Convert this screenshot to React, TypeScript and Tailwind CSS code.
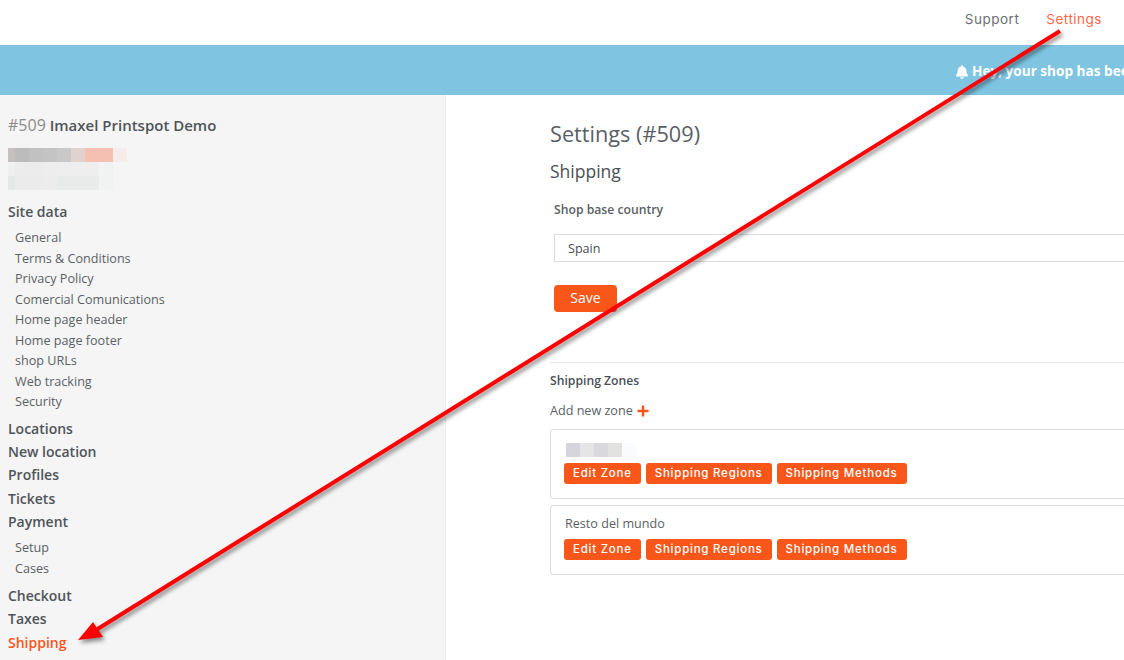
import { FaBell } from 'react-icons/fa';

const siteData = ['General', 'Terms & Conditions', 'Privacy Policy', 'Comercial Comunications', 'Home page header', 'Home page footer', 'shop URLs', 'Web tracking', 'Security'];

// pixelated blocks that hide the private data in the screenshot
const blurTop = ['#c4c0c0', '#bcbcbc', '#c1c1c1', '#c4c4c4', '#c8c8c8', '#e0d3cf', '#f5c0b2', '#f5c0b2', '#f6ecea'];
const blurMid = ['#f0f0f0', '#ececec', '#ececec', '#ededed', '#eeeeee', '#eeeeee', '#eeeeee', '#f1f2f2', '#f5f5f5'];
const blurLow = ['#e6e7e7', '#ebebeb', '#ebebeb', '#ececec', '#e9eaea', '#e9eaea', '#e9eaea', '#f1f3f3', '#f5f5f5'];
const blurZone = ['#d4d4da', '#e5e5e5', '#d9d9dd', '#e2e2e0', '#fafbfd'];

function Blur({ colors, half }: { colors: string[]; half?: boolean }) {
  return (
    <div className="flex h-[14px]">
      {colors.map((c, i) => (
        <div key={i} className={i === 0 && half ? 'w-[7px] h-[14px]' : 'w-[14px] h-[14px]'} style={{ backgroundColor: c }} />
      ))}
    </div>
  );
}

function MainLink({ label, active }: { label: string; active?: boolean }) {
  return (
    <div className={`h-[23.25px] leading-[23px] text-[14px] font-semibold ${active ? 'text-[#f9561a]' : 'text-[#4f5459]'}`}>
      {label}
    </div>
  );
}

function SubLink({ label }: { label: string }) {
  return <div className="h-[20.5px] leading-[20px] text-[12.6px] pl-[7px] text-[#5a5f66]">{label}</div>;
}

function ZoneButton({ label }: { label: string }) {
  return (
    <div className="h-[21px] px-[9px] flex items-center rounded-[3px] bg-[#f9561a] text-white text-[11.5px] tracking-[0.76px] font-['Inter',sans-serif] font-medium whitespace-nowrap">
      {label}
    </div>
  );
}

function Zone({ children }: { children: React.ReactNode }) {
  return (
    <div className="h-[70px] border border-r-0 border-[#dedede] rounded-l-[4px] pl-[13px] pt-[9px]">
      <div className="h-[24px] pb-[6px] flex items-center text-[12.6px] text-[#5a5f66]">{children}</div>
      <div className="flex gap-[5px]">
        <ZoneButton label="Edit Zone" />
        <ZoneButton label="Shipping Regions" />
        <ZoneButton label="Shipping Methods" />
      </div>
    </div>
  );
}

export default function App() {
  return (
    <div className="relative w-[1124px] h-[660px] overflow-hidden bg-white font-['Open_Sans',sans-serif]">
      {/* top nav */}
      <div className="h-[45px] flex items-center justify-end gap-[27px] pr-[22px] pb-[6px] text-[13.5px] tracking-[0.5px] font-['Inter',sans-serif]">
        <span className="text-[#6b6f75]">Support</span>
        <span className="text-[#f9694a]">Settings</span>
      </div>

      {/* banner */}
      <div className="h-[50px] bg-[#7fc5e2] flex items-center pl-[955px] gap-[3px] pt-[3px] text-white text-[13.6px] font-bold whitespace-nowrap overflow-hidden">
        <FaBell className="w-[14px] h-[14px] shrink-0" />
        <span>Hey, your shop has been created</span>
      </div>

      <div className="flex h-[565px]">
        {/* sidebar */}
        <div className="w-[446px] shrink-0 bg-[#f5f5f5] border-r border-[#ececec] pl-[8px] pt-[19px]">
          <div className="h-[22px] leading-[22px] text-[15px] font-semibold text-[#4f5459]">
            <span className="text-[#8b8b8b] text-[16px] font-normal">#509</span> Imaxel Printspot Demo
          </div>
          <div className="mt-[12px] mb-[10px]">
            <Blur colors={blurTop} half />
            <Blur colors={blurMid} half />
            <Blur colors={blurLow} half />
          </div>
          <MainLink label="Site data" />
          <div className="pt-[5px] pb-[4px]">
            {siteData.map((s) => <SubLink key={s} label={s} />)}
          </div>
          <MainLink label="Locations" />
          <MainLink label="New location" />
          <MainLink label="Profiles" />
          <MainLink label="Tickets" />
          <MainLink label="Payment" />
          <div className="pt-[5px] pb-[5px]">
            <SubLink label="Setup" />
            <SubLink label="Cases" />
          </div>
          <MainLink label="Checkout" />
          <MainLink label="Taxes" />
          <MainLink label="Shipping" active />
        </div>

        {/* content */}
        <div className="flex-1 pl-[104px] pt-[24px] min-w-0">
          <div className="h-[30px] leading-[30px] text-[21.7px] text-[#5a5f66]">Settings (#509)</div>
          <div className="mt-[10px] h-[24px] leading-[24px] text-[17.5px] text-[#4a4f55]">Shipping</div>
          <div className="mt-[17px] pl-[4px] h-[20px] leading-[20px] text-[12.2px] font-semibold text-[#5a5f66]">Shop base country</div>
          <div className="mt-[14px] ml-[4px] h-[28px] pt-[2px] border border-r-0 border-[#dcdcdc] flex items-center pl-[13px] text-[12.6px] text-[#4a4f55]">Spain</div>
          <div className="mt-[23px] ml-[4px] w-[63px] h-[27px] pb-[2px] rounded-[4px] bg-[#f9561a] text-white text-[14px] flex items-center justify-center">Save</div>
          <div className="mt-[50px] border-t border-[#e8e8e8]" />
          <div className="mt-[8px] h-[20px] leading-[20px] text-[12.2px] font-semibold text-[#4a4f55]">Shipping Zones</div>
          <div className="mt-[10px] h-[20px] flex items-center gap-[4px] text-[12.6px] text-[#5a5f66]">
            Add new zone
            <svg width="12" height="12" viewBox="0 0 12 12" className="text-[#f9561a]">
              <path d="M6 0.5v11M0.5 6h11" stroke="currentColor" strokeWidth="2.4" />
            </svg>
          </div>
          <div className="mt-[8px] flex flex-col gap-[6px]">
            <Zone><div className="ml-[2px] mt-[4px]"><Blur colors={blurZone} /></div></Zone>
            <Zone><span className="ml-[1px]">Resto del mundo</span></Zone>
          </div>
        </div>
      </div>

      {/* red annotation arrow */}
      <svg className="absolute inset-0 pointer-events-none drop-shadow-[2px_3px_2px_rgba(0,0,0,0.45)]" width="1124" height="660" viewBox="0 0 1124 660">
        <path d="M1060 31L96 630" stroke="#ff0000" strokeWidth="4" fill="none" />
        <path d="M78 640L93 622L103 637Z" fill="#ff0000" />
      </svg>
    </div>
  );
}
